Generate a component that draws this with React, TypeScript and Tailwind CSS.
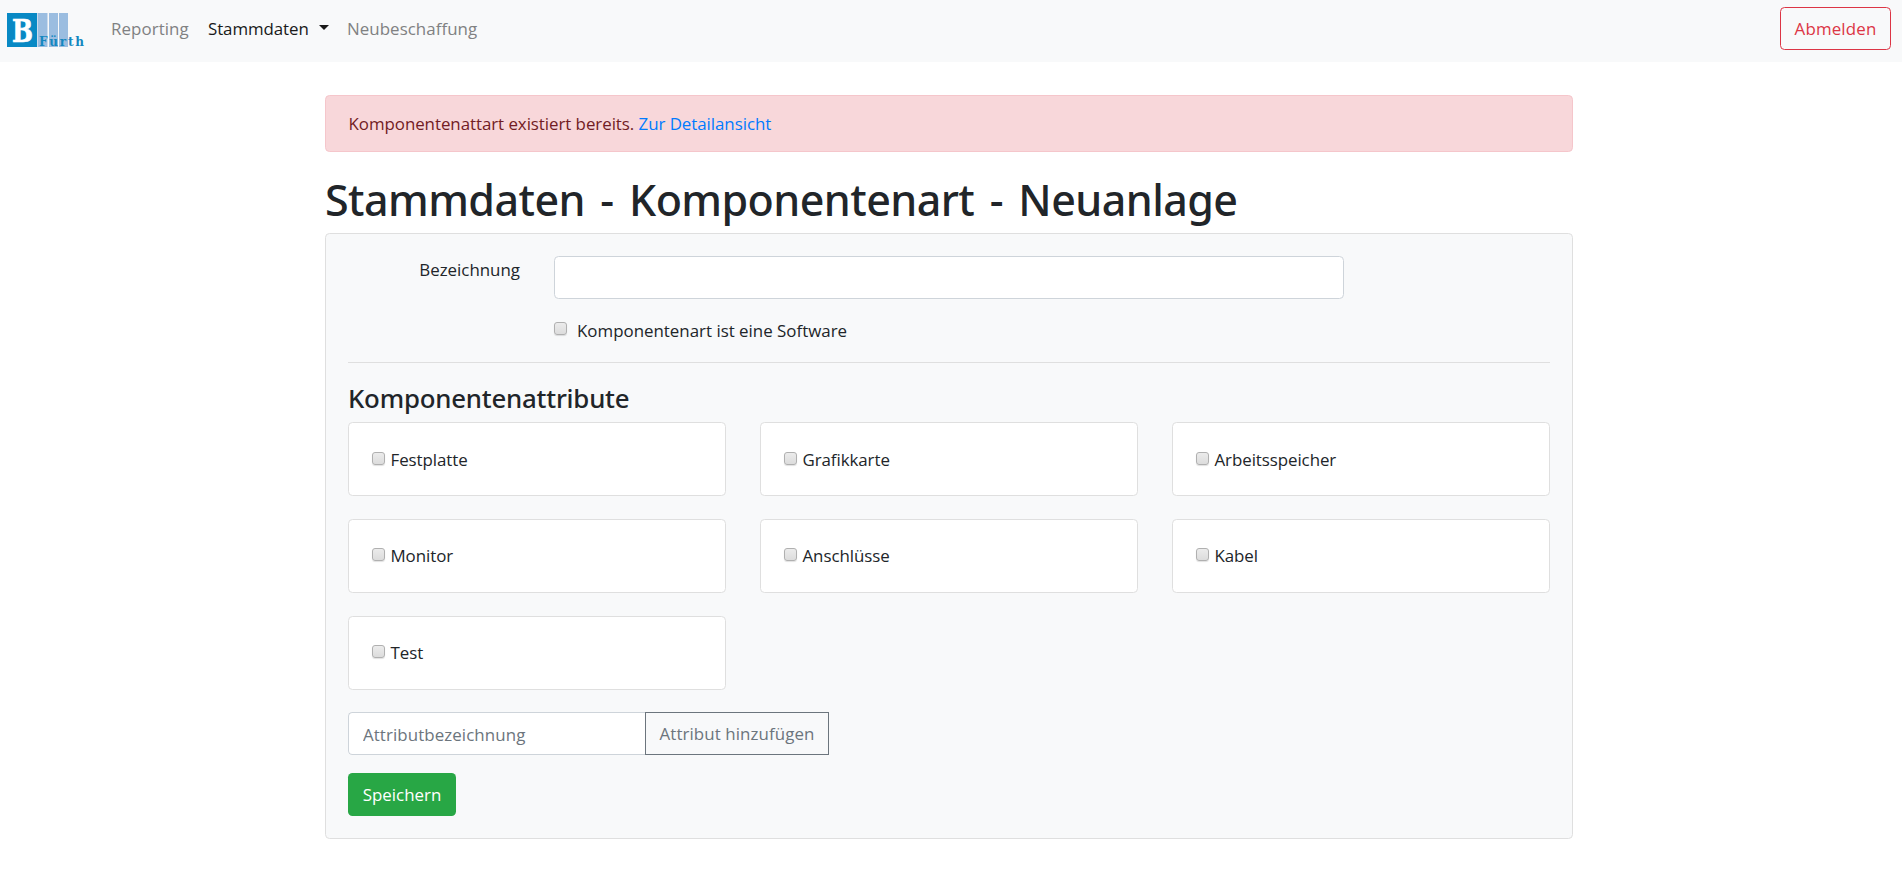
import React from 'react';

const attributes = ['Festplatte', 'Grafikkarte', 'Arbeitsspeicher', 'Monitor', 'Anschlüsse', 'Kabel', 'Test'];

function Logo() {
  return (
    <svg width="82" height="48" viewBox="0 -7 82 48" className="block">
      <rect width="30" height="34" fill="#0889c4" />
      <rect x="30.5" width="10" height="34" fill="#9bbde0" />
      <rect x="42" width="9" height="34" fill="#9bbde0" />
      <rect x="52" width="9" height="34" fill="#9bbde0" />
      <text x="5" y="28.6" fontFamily="'DejaVu Serif', serif" fontWeight="700" fontSize="32.5" textLength="21" lengthAdjust="spacingAndGlyphs" fill="#ffffff" stroke="#ffffff" strokeWidth="0.7">B</text>
      <text x="32" y="33" fontFamily="'DejaVu Serif', serif" fontWeight="700" fontSize="12" textLength="45" fill="#1487bf">Fürth</text>
    </svg>
  );
}

function Checkbox() {
  return (
    <input
      type="checkbox"
      className="block size-[13px] shrink-0 appearance-none rounded-[3px] border border-[#b0b0b0] bg-linear-to-b from-[#ececec] to-[#dcdcdc] shadow-[0_1px_1px_rgba(0,0,0,0.12)]"
    />
  );
}

function AttributeCard({ name }: { name: string }) {
  return (
    <label className="flex h-[74px] rounded-[4.5px] border border-[#dfdfdf] bg-white px-[22.5px] pt-[22px] leading-[27px] tracking-[-0.004em] nth-[-n+3]:pt-[23px]">
      <span className="mt-[6px] mr-[6px]">
        <Checkbox />
      </span>
      {name}
    </label>
  );
}

export default function App() {
  return (
    <div className="min-h-[883px] bg-white font-['Open_Sans',sans-serif] text-[16.9px] leading-[27px] text-[#212529]">
      <nav className="flex h-[62px] items-start bg-[#f8f9fa] pr-[11px] pl-[7px]">
        <div className="mt-[6px] w-[104px]">
          <Logo />
        </div>
        <div className="mt-[15px] flex">
          <a className="w-[97px] tracking-[0.004em] text-[#808182]">Reporting</a>
          <a className="flex w-[139px] text-[#191919]">
            <span className="w-[111px] tracking-[-0.005em]">Stammdaten</span>
            <span className="mt-[10px] size-0 border-x-[5.4px] border-t-[5.4px] border-x-transparent border-t-[#191919]" />
          </a>
          <a className="tracking-[0.003em] text-[#808182]">Neubeschaffung</a>
        </div>
        <button className="mt-[7px] ml-auto h-[43px] w-[111px] rounded-[4.5px] border border-[#dc3545] pb-[1px] tracking-[0.01em] text-[#dc3545]">Abmelden</button>
      </nav>

      <main className="ml-[325px] w-[1248px] pt-[33px]">
        <div className="h-[57px] rounded-[4.5px] border border-[#f5c6cb] bg-[#f8d7da] px-[22.5px] pt-[14px] tracking-[-0.003em] text-[#721c24]">
          Komponentenattart existiert bereits. <a className="text-[#007bff]">Zur Detailansicht</a>
        </div>

        <h1 className="mt-[21px] h-[60px] font-['Noto_Sans',sans-serif] text-[43px] leading-[54px] font-medium tracking-[-0.013em] [word-spacing:4.8px]">
          Stammdaten - Komponentenart - Neuanlage
        </h1>

        <section className="h-[606px] rounded-[4.5px] border border-[#dfdfdf] bg-[#f8f9fa] px-[22px] pt-[22px]">
          <div className="flex">
            <label className="w-[206px] pr-[34px] text-right">Bezeichnung</label>
            <input className="h-[43px] w-[790px] rounded-[4.5px] border border-[#ced4da] bg-white px-[13.5px]" />
          </div>
          <label className="mt-[18px] ml-[206px] flex">
            <span className="mt-[5px] mr-[10px]">
              <Checkbox />
            </span>
            Komponentenart ist eine Software
          </label>

          <hr className="mt-[18px] border-[#dfdfdf]" />

          <h4 className="mt-[19px] h-[40px] font-['Noto_Sans',sans-serif] text-[25.8px] leading-[33px] font-medium tracking-[-0.008em]">Komponentenattribute</h4>

          <div className="grid grid-cols-3 gap-x-[34px] gap-y-[23px]">
            {attributes.map((name) => (
              <AttributeCard key={name} name={name} />
            ))}
          </div>

          <div className="mt-[22px] flex">
            <input
              placeholder="Attributbezeichnung"
              className="h-[43px] w-[297px] rounded-l-[4.5px] border border-r-0 border-[#ced4da] bg-white px-[14px] pt-[2px] tracking-[0.005em] placeholder:text-[#6c757d]"
            />
            <button className="h-[43px] w-[184px] border border-[#6c757d] tracking-[0.005em] text-[#6c757d]">Attribut hinzufügen</button>
          </div>

          <button className="mt-[18px] block h-[43px] w-[108px] rounded-[4.5px] bg-[#28a745] text-white">Speichern</button>
        </section>
      </main>
    </div>
  );
}
